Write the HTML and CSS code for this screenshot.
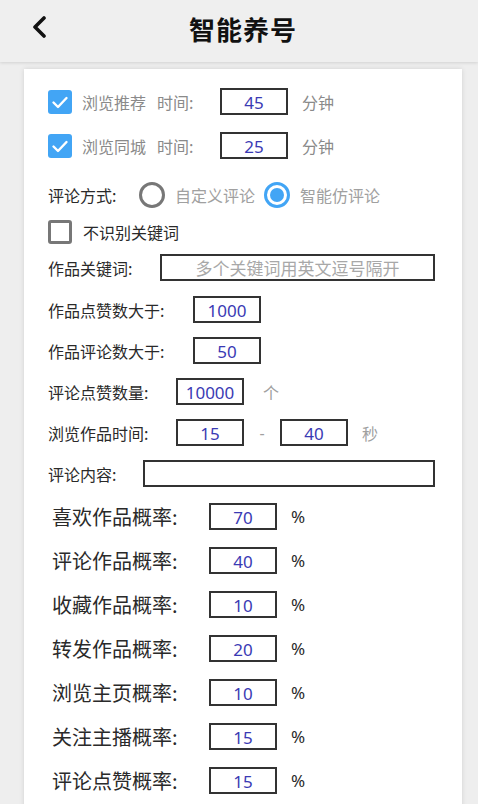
FILE: index.html
```html
<!DOCTYPE html>
<html lang="zh">
<head>
<meta charset="utf-8">
<title>智能养号</title>
<link rel="stylesheet" href="styles.css">
</head>
<body>
<header class="topbar">
  <svg class="back" width="16" height="22" viewBox="0 0 16 22"><polyline points="12,2 3,11 12,20" fill="none" stroke="#111" stroke-width="3.6" stroke-linecap="round" stroke-linejoin="round"/></svg>
  <h1 class="title">智能养号</h1>
</header>
<main class="card">
  <div class="row r-first">
    <span class="cb cb-on"><svg width="24" height="24" viewBox="0 0 24 24"><polyline points="5.5,12.5 10,17 18.5,8" fill="none" stroke="#fff" stroke-width="2.4" stroke-linecap="round" stroke-linejoin="round"/></svg></span>
    <span class="lab gray w-name">浏览推荐</span>
    <span class="lab gray w-time">时间:</span>
    <span class="box w68">45</span>
    <span class="unit gray">分钟</span>
  </div>
  <div class="row r-tight">
    <span class="cb cb-on"><svg width="24" height="24" viewBox="0 0 24 24"><polyline points="5.5,12.5 10,17 18.5,8" fill="none" stroke="#fff" stroke-width="2.4" stroke-linecap="round" stroke-linejoin="round"/></svg></span>
    <span class="lab gray w-name">浏览同城</span>
    <span class="lab gray w-time">时间:</span>
    <span class="box w68">25</span>
    <span class="unit gray">分钟</span>
  </div>
  <div class="row r-radio">
    <span class="lab dark w-mode">评论方式:</span>
    <span class="radio"></span>
    <span class="lab light radio-text">自定义评论</span>
    <span class="radio radio-on"><span class="dot"></span></span>
    <span class="lab light radio-text">智能仿评论</span>
  </div>
  <div class="row r-check">
    <span class="cb cb-off"></span>
    <span class="lab dark check-text">不识别关键词</span>
  </div>
  <div class="row r-kw">
    <span class="lab dark w-kw">作品关键词:</span>
    <span class="box w-kwbox placeholder">多个关键词用英文逗号隔开</span>
  </div>
  <div class="row r-std">
    <span class="lab dark w-gt">作品点赞数大于:</span>
    <span class="box w68">1000</span>
  </div>
  <div class="row r-std">
    <span class="lab dark w-gt">作品评论数大于:</span>
    <span class="box w68">50</span>
  </div>
  <div class="row r-std">
    <span class="lab dark w-mid">评论点赞数量:</span>
    <span class="box w68">10000</span>
    <span class="unit light unit-ge">个</span>
  </div>
  <div class="row r-std">
    <span class="lab dark w-mid">浏览作品时间:</span>
    <span class="box w68">15</span>
    <span class="dash light">-</span>
    <span class="box w68">40</span>
    <span class="unit light">秒</span>
  </div>
  <div class="row r-std">
    <span class="lab dark w-content">评论内容:</span>
    <span class="box w-contentbox"></span>
  </div>
  <div class="row r-prob r-prob-first">
    <span class="plab">喜欢作品概率:</span>
    <span class="box w68">70</span>
    <span class="pct">%</span>
  </div>
  <div class="row r-prob">
    <span class="plab">评论作品概率:</span>
    <span class="box w68">40</span>
    <span class="pct">%</span>
  </div>
  <div class="row r-prob">
    <span class="plab">收藏作品概率:</span>
    <span class="box w68">10</span>
    <span class="pct">%</span>
  </div>
  <div class="row r-prob">
    <span class="plab">转发作品概率:</span>
    <span class="box w68">20</span>
    <span class="pct">%</span>
  </div>
  <div class="row r-prob">
    <span class="plab">浏览主页概率:</span>
    <span class="box w68">10</span>
    <span class="pct">%</span>
  </div>
  <div class="row r-prob">
    <span class="plab">关注主播概率:</span>
    <span class="box w68">15</span>
    <span class="pct">%</span>
  </div>
  <div class="row r-prob">
    <span class="plab">评论点赞概率:</span>
    <span class="box w68">15</span>
    <span class="pct">%</span>
  </div>
</main>
</body>
</html>
```
FILE: styles.css
```css
html, body {
  margin: 0;
  padding: 0;
}
body {
  background: #eeeeee;
  font-family: "Noto Sans", "Noto Sans CJK SC", sans-serif;
  height: 804px;
  overflow: hidden;
}
.topbar {
  height: 62px;
  background: #efefef;
  box-shadow: 0 1px 3px rgba(0,0,0,0.12);
  display: flex;
  align-items: center;
  justify-content: center;
  position: relative;
}
.back {
  position: absolute;
  left: 32px;
  top: 16px;
}
.title {
  margin: 0;
  font-size: 26px;
  font-weight: 700;
  color: #111;
  font-family: "Noto Sans CJK SC", sans-serif;
  letter-spacing: 1px;
  padding-left: 8px;
  margin-top: -6px;
}
.card {
  margin: 7px 0 0 24px;
  width: 438px;
  height: 760px;
  background: #fff;
  box-shadow: 0 0 5px rgba(0,0,0,0.12);
  padding: 19px 0 0 24px;
  box-sizing: border-box;
}
.row {
  display: flex;
  align-items: center;
  height: 27px;
}
.r-tight { margin-top: 17px; }
.r-radio { margin-top: 22px; height: 28px; }
.r-check { margin-top: 11px; height: 24px; }
.r-kw { margin-top: 10px; }
.r-std { margin-top: 14px; }
.r-kw + .r-std { margin-top: 15px; }
.r-prob { margin-top: 17px; padding-left: 4px; }
.r-prob-first { margin-top: 16px; }

.lab {
  font-family: "Noto Sans CJK SC", sans-serif;
  font-size: 16px;
  white-space: nowrap;
}
.gray { color: #8a8a8a; }
.light { color: #a0a0a0; }
.dark { color: #2a2a2a; }

.cb {
  width: 24px;
  height: 24px;
  box-sizing: border-box;
  border-radius: 3px;
  flex: none;
  display: flex;
}
.cb-on { background: #42a5f5; }
.cb-off { border: 3px solid #777; }

.w-name { margin-left: 10px; width: 75px; }
.w-time { width: 63px; }
.w-mode { width: 91px; }
.w-kw { width: 112px; }
.w-gt { width: 145px; }
.w-mid { width: 128px; }
.w-content { width: 95px; }
.check-text { margin-left: 11px; }

.box {
  height: 27px;
  box-sizing: border-box;
  border: 2px solid #333;
  padding-top: 2px;
  display: flex;
  align-items: center;
  justify-content: center;
  color: #3a3ab4;
  font-family: "Noto Sans", sans-serif;
  font-size: 17px;
  flex: none;
}
.w68 { width: 68px; }
.w-kwbox { width: 275px; }
.w-contentbox { width: 292px; }
.placeholder {
  font-family: "Noto Sans CJK SC", sans-serif;
  font-size: 17px;
  color: #a8a8a8;
  padding-top: 0;
}
.unit {
  font-family: "Noto Sans CJK SC", sans-serif;
  font-size: 16px;
  margin-left: 14px;
}
.unit-ge { margin-left: 19px; }
.dash {
  width: 36px;
  text-align: center;
  font-size: 16px;
  font-family: "Noto Sans", sans-serif;
}

.radio {
  width: 26px;
  height: 26px;
  box-sizing: border-box;
  border: 3px solid #777;
  border-radius: 50%;
  flex: none;
  display: flex;
  align-items: center;
  justify-content: center;
}
.radio-on { border-color: #42a5f5; margin-left: 9px; }
.dot {
  width: 14px;
  height: 14px;
  border-radius: 50%;
  background: #42a5f5;
}
.radio-text { margin-left: 10px; }

.plab {
  width: 157px;
  font-family: "Noto Sans CJK SC", sans-serif;
  font-size: 20px;
  color: #2a2a2a;
  white-space: nowrap;
}
.pct {
  margin-left: 14px;
  font-size: 17px;
  color: #2a2a2a;
  font-family: "Noto Sans", sans-serif;
}
```
